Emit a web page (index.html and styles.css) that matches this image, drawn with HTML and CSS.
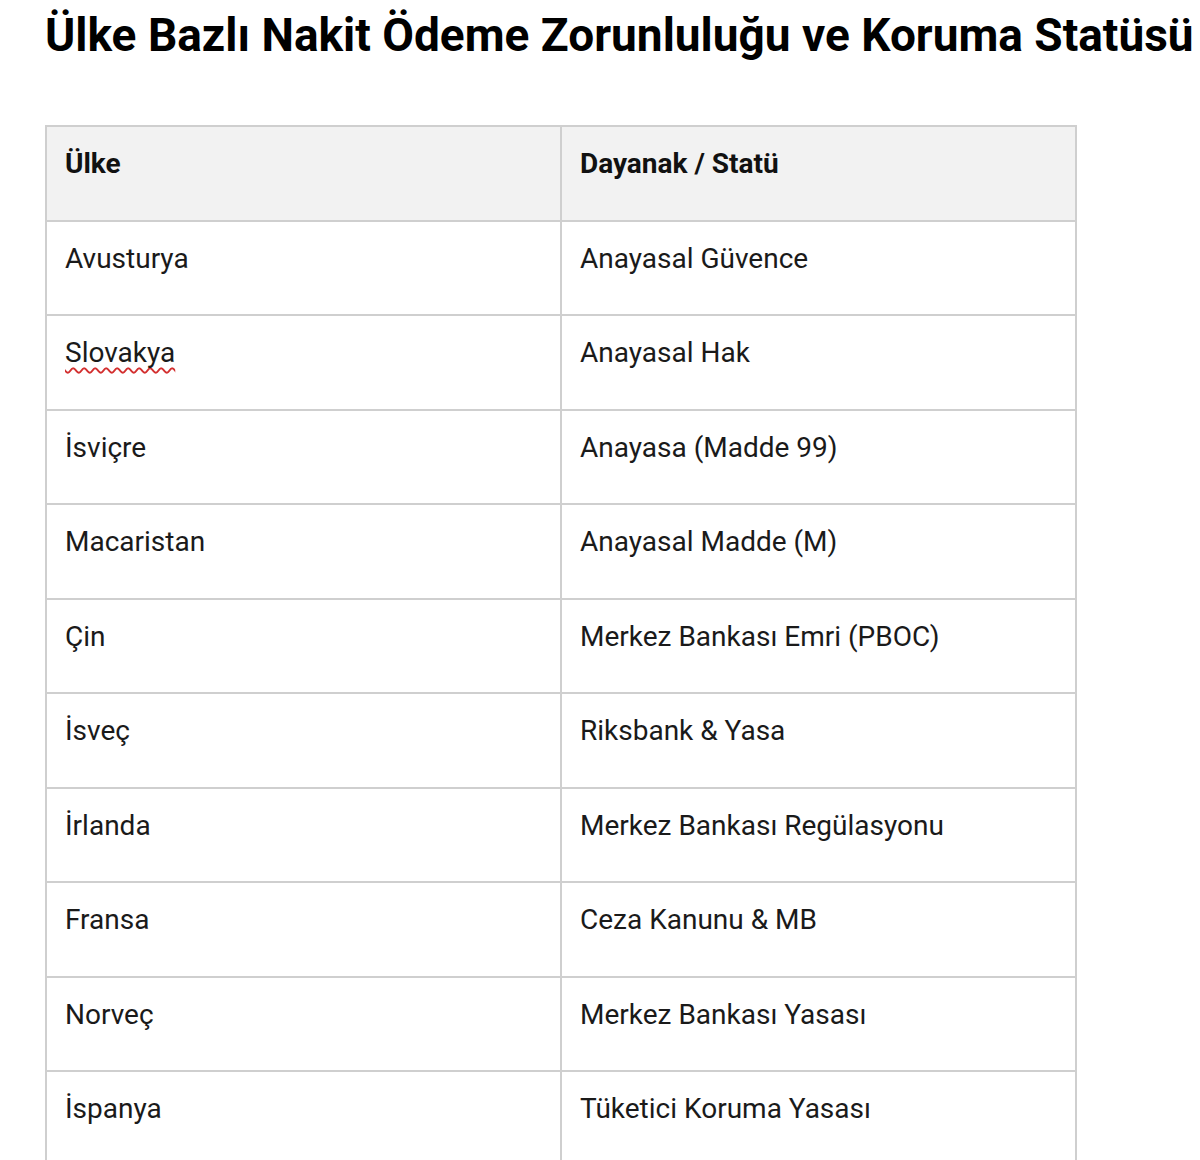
FILE: index.html
```html
<!DOCTYPE html>
<html lang="tr">
<head>
<meta charset="utf-8">
<title>Ülke Bazlı Nakit Ödeme Zorunluluğu ve Koruma Statüsü</title>
<link rel="stylesheet" href="styles.css">
</head>
<body>
<div class="page">
  <h1 class="title">Ülke Bazlı Nakit Ödeme Zorunluluğu ve Koruma Statüsü</h1>
  <table class="grid">
    <thead>
      <tr><th>Ülke</th><th>Dayanak / Statü</th></tr>
    </thead>
    <tbody>
      <tr><td>Avusturya</td><td>Anayasal Güvence</td></tr>
      <tr><td><span class="misspelled">Slovakya</span></td><td>Anayasal Hak</td></tr>
      <tr><td>İsviçre</td><td>Anayasa (Madde 99)</td></tr>
      <tr><td>Macaristan</td><td>Anayasal Madde (M)</td></tr>
      <tr><td>Çin</td><td>Merkez Bankası Emri (PBOC)</td></tr>
      <tr><td>İsveç</td><td>Riksbank &amp; Yasa</td></tr>
      <tr><td>İrlanda</td><td>Merkez Bankası Regülasyonu</td></tr>
      <tr><td>Fransa</td><td>Ceza Kanunu &amp; MB</td></tr>
      <tr><td>Norveç</td><td>Merkez Bankası Yasası</td></tr>
      <tr><td>İspanya</td><td>Tüketici Koruma Yasası</td></tr>
    </tbody>
  </table>
</div>
</body>
</html>
```

FILE: styles.css
```css
html, body {
  margin: 0;
  padding: 0;
  background: #ffffff;
  overflow: hidden;
}

.page {
  width: 1200px;
  height: 1160px;
  overflow: hidden;
  padding: 6px 0 0 45px;
  box-sizing: border-box;
  font-family: Roboto, "Noto Sans", sans-serif;
  color: #1a1a1a;
}

.title {
  margin: 0;
  font-size: 46px;
  font-weight: 700;
  line-height: 58px;
  color: #000;
  white-space: nowrap;
}

.grid {
  margin-top: 61px;
  border-collapse: separate;
  border-spacing: 0;
  width: 1032px;
  table-layout: fixed;
  border-top: 2px solid #cfcfcf;
  border-left: 2px solid #cfcfcf;
}

.grid th,
.grid td {
  text-align: left;
  vertical-align: top;
  font-size: 28px;
  line-height: normal;
  padding: 20px 18px 39.55px 18px;
  border-right: 2px solid #cfcfcf;
  border-bottom: 2px solid #cfcfcf;
}

.grid th {
  background: #f2f2f2;
  font-weight: 700;
  color: #111;
}

.grid td {
  font-weight: 400;
  color: #1a1a1a;
}

.misspelled {
  text-decoration: underline wavy #d32f2f;
  text-decoration-thickness: 1.5px;
  text-underline-offset: 5px;
  text-decoration-skip-ink: none;
}
```
